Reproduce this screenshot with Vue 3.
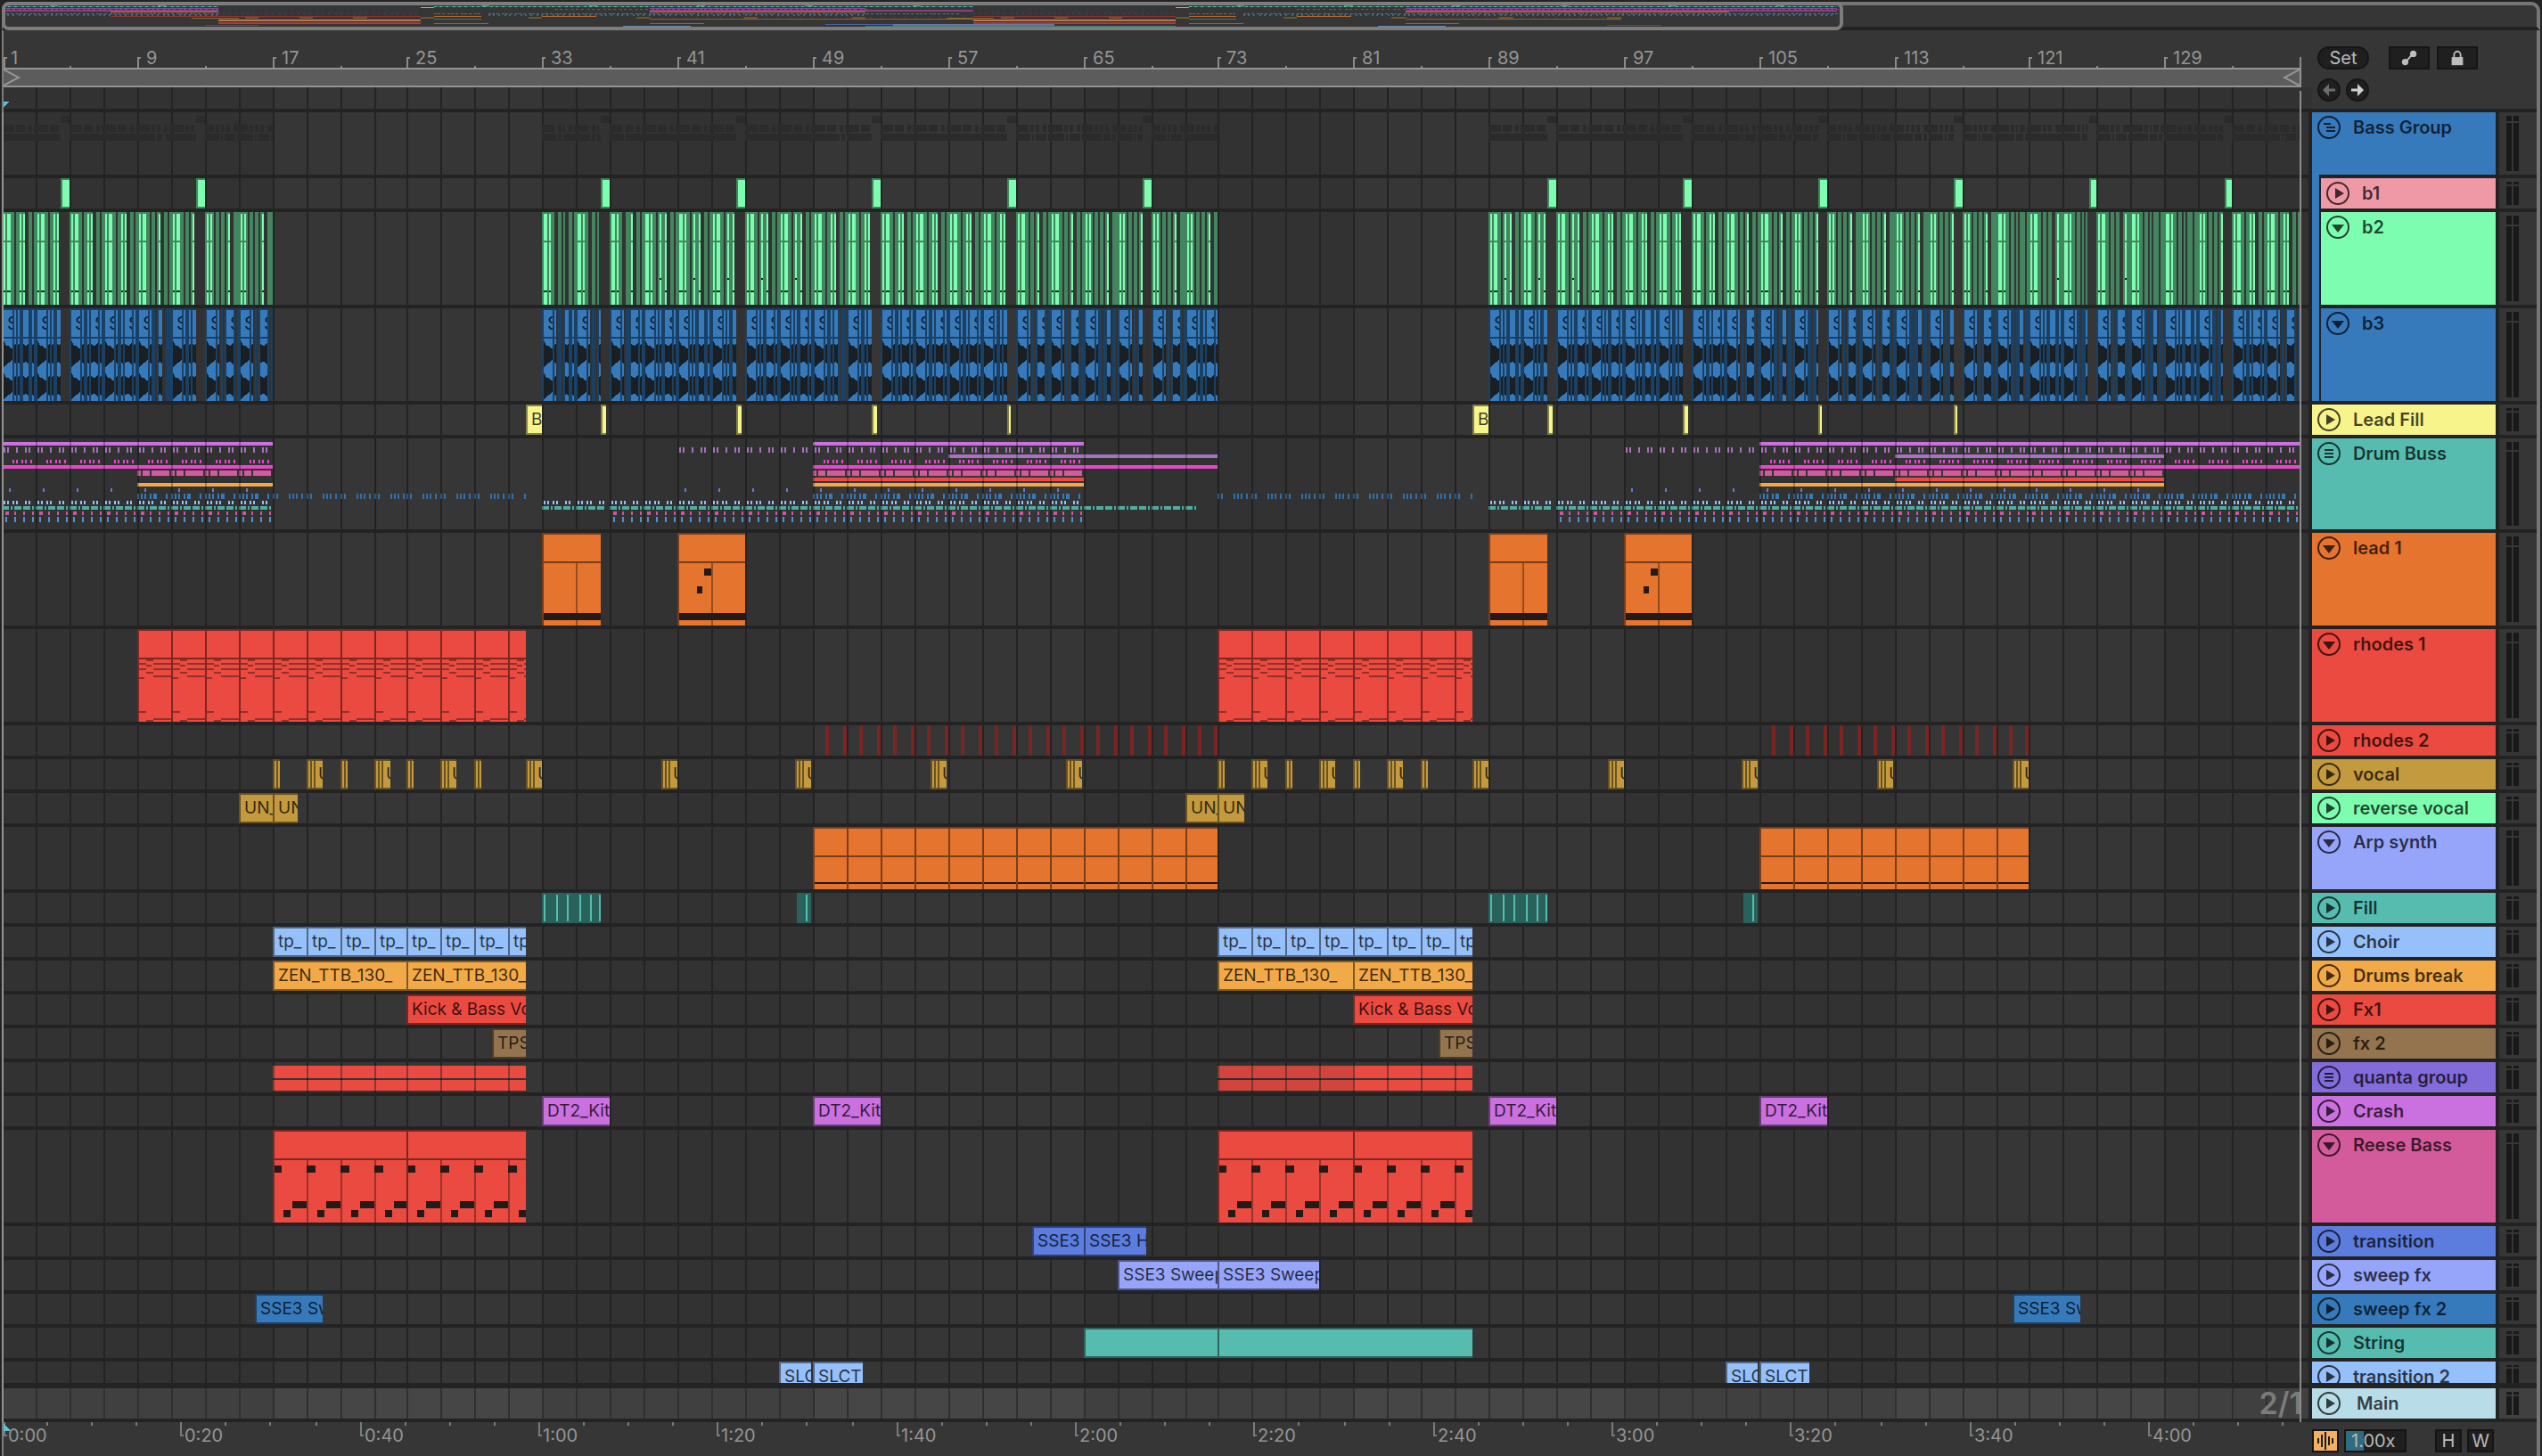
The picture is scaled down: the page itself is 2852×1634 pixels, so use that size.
<template>
  <div class="arranger">
    <!-- Overview strip -->
    <div class="overview">
      <svg class="overview-map" aria-hidden="true">
        <path v-for="(m, i) in overview" :key="i" :d="m.d" :fill="m.color" />
      </svg>
      <div class="overview-window" :style="{ width: overviewWidth + 'px' }"></div>
    </div>

    <!-- Beat ruler and set controls -->
    <div class="top">
      <div class="ruler-area">
        <div class="beat-ruler">
          <svg class="fill-svg" aria-hidden="true">
            <path :d="beatTicks" fill="#8a8a8a" />
          </svg>
          <span
            v-for="b in beatLabels"
            :key="b"
            class="beat-label"
            :style="{ left: barX(b) + 10 + 'px' }"
          >{{ b }}</span>
        </div>
        <div class="loop-brace" :style="{ width: songEnd + 2 + 'px' }">
          <svg class="loop-mark" viewBox="0 0 20 18" aria-hidden="true"><path d="M0 0 17 9 0 18" /></svg>
          <svg class="loop-mark" viewBox="0 0 20 18" aria-hidden="true"><path d="M20 0 3 9 20 18" /></svg>
        </div>
        <div class="scrub">
          <svg class="fill-svg" aria-hidden="true">
            <rect width="100%" height="100%" fill="#323232" />
            <path :d="bandPath" fill="#363636" />
            <path :d="gridPath" fill="#232323" />
            <path d="M0 16H6L0 22Z" fill="#57c3d8" />
          </svg>
        </div>
      </div>
      <div class="set-controls">
        <div class="control-row">
          <button class="pill" type="button">Set</button>
          <button class="square first" type="button" aria-label="Automation mode">
            <svg viewBox="0 0 24 22" aria-hidden="true">
              <path d="M7 17 17 5" stroke="#bdbdbd" stroke-width="2" />
              <circle cx="7" cy="16" r="4" fill="#bdbdbd" /><circle cx="17" cy="6" r="4" fill="#bdbdbd" />
            </svg>
          </button>
          <button class="square" type="button" aria-label="Lock envelopes">
            <svg viewBox="0 0 24 22" aria-hidden="true">
              <path d="M8 11V7a4 4 0 0 1 8 0v4" fill="none" stroke="#bdbdbd" stroke-width="2" />
              <rect x="5" y="10" width="14" height="10" fill="#bdbdbd" />
            </svg>
          </button>
        </div>
        <div class="control-row second">
          <button class="round" type="button" aria-label="Previous locator">
            <svg viewBox="0 0 22 22" aria-hidden="true"><path d="M4 11 11 4V9.500H18V12.500H11V18Z" fill="#6d6d6d" /></svg>
          </button>
          <button class="round" type="button" aria-label="Next locator">
            <svg viewBox="0 0 22 22" aria-hidden="true"><path d="M18 11 11 4V9.500H4V12.500H11V18Z" fill="#d0d0d0" /></svg>
          </button>
        </div>
      </div>
    </div>

    <!-- Tracks -->
    <div class="tracks">
      <div
        v-for="t in tracks"
        :key="t.name"
        class="track"
        :class="{ nested: t.nested, main: t.name === 'Main', last: t.name === 'transition 2' }"
        :style="{ height: t.h + 'px' }"
      >
        <div class="lane">
          <svg class="fill-svg" aria-hidden="true">
            <rect width="100%" height="100%" :fill="t.name === 'Main' ? '#404040' : '#323232'" />
            <path :d="bandPath" :fill="t.name === 'Main' ? '#464646' : '#363636'" />
            <path :d="gridPath" :fill="t.name === 'Main' ? '#303030' : '#232323'" />
            <path v-for="(s, i) in t.shapes" :key="i" :d="s.d" :fill="s.color" :opacity="s.opacity" />
          </svg>
          <div
            v-for="(c, i) in t.clips"
            :key="i"
            class="clip"
            :class="{ tall: t.h > 60 }"
            :style="clipStyle(c, t)"
          >
            <svg v-if="c.notes" class="clip-notes" aria-hidden="true">
              <path :d="c.notes" :fill="c.noteColor" />
            </svg>
            <span v-if="c.label" class="clip-label" :class="{ inset: c.inset }">{{ c.label }}</span>
          </div>
          <span v-for="(x, i) in t.marks" :key="'m' + i" class="wave-label" :style="{ left: x.x + 'px', width: x.w + 'px' }">S</span>
          <span v-if="t.name === 'Main'" class="grid-size">2/1</span>
        </div>

        <div class="head-cell">
          <div v-if="t.nested" class="strip"></div>
          <div class="head" :style="{ background: t.color }">
            <button class="fold" type="button" :aria-label="'Fold ' + t.name">
              <svg viewBox="0 0 26 26" aria-hidden="true">
                <circle cx="13" cy="13" r="12" fill="none" stroke="currentColor" stroke-width="2" />
                <path :d="icons[t.icon]" fill="currentColor" />
              </svg>
            </button>
            <span class="name">{{ t.name }}</span>
          </div>
        </div>

        <div class="meter">
          <i></i><i></i>
        </div>
      </div>
      <div class="end-line" :style="{ left: songEnd + 'px' }"></div>
    </div>

    <!-- Time ruler -->
    <div class="bottom">
      <div class="time-ruler">
        <svg class="fill-svg" aria-hidden="true">
          <path :d="timeTicks" fill="#7a7a7a" />
          <path d="M0 2 8 10H0Z" fill="#57c3d8" />
        </svg>
        <span v-for="l in timeLabels" :key="l.text" class="time-label" :style="{ left: l.x + 'px' }">{{ l.text }}</span>
      </div>
      <div class="footer-controls">
        <button class="wave-btn" type="button" aria-label="Waveform zoom">
          <svg viewBox="0 0 26 22" aria-hidden="true">
            <path d="M4 8h2v6H4zM8 4h2v14H8zM12 1h2v20h-2zM16 6h2v10h-2zM20 8h2v6h-2z" fill="#1d1d1d" />
          </svg>
        </button>
        <input class="speed" type="text" value="1.00x" aria-label="Waveform height">
        <button class="mini h-btn" type="button">H</button>
        <button class="mini" type="button">W</button>
      </div>
    </div>
  </div>
</template>

<script setup>
import { ref } from 'vue'

// 时间轴：小节 -> 车道内像素
const barX = (bar) => Math.floor(1.452 + 9.4795 * (bar - 1)) * 2 - 4
const rect = (x, y, w, h) => `M${x} ${y}h${w}v${h}h${-w}z`
const songEnd = barX(137)

// Grid
let gridPath = ''
let bandPath = ''
for (let b = 3; b <= 135; b += 2) gridPath += rect(barX(b), 0, 2, 110)
for (let b = 17; b < 137; b += 32) bandPath += rect(barX(b), 0, barX(b + 16) - barX(b), 110)

// Beat ruler
const beatLabels = []
let beatTicks = rect(songEnd, 30, 2, 12)
for (let b = 1; b < 137; b += 8) {
  beatLabels.push(b)
  const x = Math.max(0, barX(b))
  beatTicks += rect(x, 30, 2, 12) + rect(x, 30, 4, 2) + rect(barX(b + 4), 40, 2, 2)
}

// Time ruler
const timeLabels = []
let timeTicks = ''
for (let n = 0; n <= 51; n++) {
  const x = Math.max(0, Math.floor((2.9 + 50.17 * n) / 2) * 2 - 4)
  if (n % 4 === 0) {
    const sec = n * 5
    timeLabels.push({ x: x + 5, text: Math.floor(sec / 60) + ':' + String(sec % 60).padStart(2, '0') })
    timeTicks += rect(x, 0, 2, 16) + rect(x, 14, 4, 2)
  } else {
    timeTicks += rect(x, 0, 2, 4)
  }
}

const icons = {
  right: 'M10 7 20 13 10 19Z',
  down: 'M6 10H20L13 19Z',
  group: 'M8 8h10v2H8zM8 12h10v2H8zM8 16h10v2H8z',
  groupOpen: 'M7 8h8v2H7zM10 12h10v2H10zM10 16h10v2H10z'
}

const C = {
  blue: '#367abc', mint: '#7dfdb0', yellow: '#f7f48c', teal: '#57bcb0', orange: '#e5742e',
  red: '#eb4a40', gold: '#c49a3e', peri: '#96a5fa', sky: '#96c0fa', amber: '#f2a948',
  brown: '#93744f', violet: '#816cda', orchid: '#ca70df', pink: '#d35b9b', indigo: '#5c7ddd'
}
const ink = '#241a18'

// Two-bar patterns, one character per 2px cell
const gA = 'dgdggdd.dhddg..dd.d'
const gA2 = 'dggdgdd.dhddg..dd.d'
const gB = 'dgdggdd.ddgdg..dd.d'
const gC = 'dgdggdd.dd.dg..dd.d'
const gD = 'dgdgd.dd.dd.dg..ddd'
const gE = 'dggdgdd.dd.d.ddd.dd'
const gF = 'dgdggdd.dd.dd..dhdd'
const stop = (s, n) => s.slice(0, 19 - n) + '.'.repeat(n)

const greenCells = [
  [1, [gB, stop(gB, 6), gB, gB, gC, stop(gC, 6), gD, gD]],
  [33, ['dggdgdd..dd.d..dd.d', 'dggdgdd..dd.d......', 'dggdgdd..dddg..dd.d', gA2, gA2, stop(gA, 6), gA, gA,
    gB, stop(gB, 6), gB, gB, gB, stop(gB, 6), gC, gC, gD, stop(gD, 5), gD, gD]],
  [89, [gA, stop(gA, 6), gA, gB, gB, stop(gB, 6), gB, gC, gC, stop(gD, 5), gD, gD, gD, stop(gD, 5), gD, gE,
    gF, stop(gE, 5), gF, gE, gE, stop(gD, 5), gB, gB]]
]

const bA = 'dbbbbbdbdbddbbbbdbd'
const bB = 'dbbbbbdbddbdbbbbdbd'
const bC = 'dbbbbbdbdd.ddbb.dd.'
const bD = 'dbbbbbdb.d.dbbbbd.d'
const bE = 'dbbbbbdbdbddbbbddbd'
const blueCells = [
  [1, [bE, stop(bA, 5), bB, bB, 'dbbbbbdbdd.dbb..ddd', stop(bB, 5), bD, bD]],
  [33, ['dbbbbbdb.dd.dbbddbd', 'dbbbbbdb.dd.db.....', 'dbbbbbdb.dddbbbbdbd', bA, bE, stop(bA, 5), bA, bA,
    'dbbbbbdbddbdbbd.dd.', stop(bB, 5), bB, bB, bB, stop(bB, 5), bD, bD, bC, stop(bD, 5), bD, bB]],
  [89, [bE, stop(bA, 5), bA, bA, bE, stop(bB, 5), bB, bD, bC, stop(bC, 5), bD, bD, bC, stop(bD, 5), bD, bC,
    bE, stop(bC, 5), bD, bC, bE, stop(bC, 5), bB, bD]]
]

// 把图案展开成 {x, w, ch}
const expand = (groups) => {
  const runs = []
  groups.forEach(([start, list]) => {
    list.forEach((pattern, i) => {
      const x0 = barX(start + i * 2)
      const limit = barX(start + i * 2 + 2)
      let k = 0
      while (k < 19) {
        let n = k
        while (n < 19 && pattern[n] === pattern[k]) n++
        const x = x0 + k * 2
        const w = Math.min(limit, x0 + n * 2) - x
        if (pattern[k] !== '.' && w > 0) runs.push({ x, w, ch: pattern[k] })
        k = n
      }
    })
  })
  return runs
}

const greenRuns = expand(greenCells)
const blueRuns = expand(blueCells)
const join = (list, fn) => list.map(fn).join('')
const fillBars = []
for (let b = 4.5; b < 137; b += 8) {
  if ((b > 17 && b < 33) || (b > 73 && b < 89)) continue
  fillBars.push(b)
}

const greenBright = greenRuns.filter((r) => r.ch !== 'd')
const greenShapes = [
  { color: '#42865f', d: join(greenRuns, (r) => rect(r.x, 0, r.w, 104)) },
  { color: C.mint, d: join(greenBright, (r) => rect(r.x, 2, r.w, 30) + rect(r.x, 34, r.w, 70)) },
  { color: '#10261b', d: join(greenBright, (r) => rect(r.x, r.ch === 'h' ? 74 : 88, r.w, 2)) }
]

const blueBright = blueRuns.filter((r) => r.ch === 'b')
const lobe = (r, mid) => {
  if (r.w >= 10) {
    return `M${r.x} ${mid - 15}l3 6l3 0l2 3l2 0v12l-2 3l-3 1l-2 3l-3 2z`
  }
  return `M${r.x} ${mid - 11}l${r.w / 2} 2l${r.w / 2} -3v24l${-r.w / 2} -3l${-r.w / 2} 1z`
}
const blueShapes = [
  { color: '#1a4163', d: join(blueRuns, (r) => rect(r.x, 0, r.w, 104)) },
  { color: C.blue, d: join(blueBright, (r) => rect(r.x, 2, r.w, 30) + rect(r.x, 34, r.w, 70)) },
  { color: '#1a1f24', d: join(blueBright, (r) => lobe(r, 51) + lobe(r, 87)) }
]
const blueMarks = blueBright.filter((r) => r.w >= 8).map((r) => ({ x: r.x, w: r.w }))

const groupShapes = [
  {
    color: '#2b2b2b',
    d: join(fillBars, (b) => rect(barX(b), 4, barX(b + 0.5) - barX(b), 8)) +
      join(greenRuns, (r) => rect(r.x, 14, r.w, 8)) +
      join(blueRuns, (r) => rect(r.x, 24, r.w, 8))
  }
]

// Drum Buss: [y, height, colour, cells or null for solid, spans]
const single = (...xs) => xs.map((x) => [x, 1])
const drumRows = [
  [4, 4, '#cc70e0', null, [[1, 17], [49, 65], [105, 137]]],
  [10, 6, '#a574bd', single(1, 3, 8, 13, 15), [[1, 17], [41, 65], [97, 137]]],
  [18, 4, '#a574bd', null, [[57, 73], [113, 129]]],
  [24, 4, '#e648cb', single(6, 8, 11, 13, 16), [[1, 17], [49, 65], [105, 137]]],
  [30, 4, '#e648cb', null, [[1, 17], [49, 73], [105, 137]]],
  [36, 6, '#d35b9b', [[0, 2], [3, 4], [8, 10]], [[9, 17], [49, 65], [105, 129]]],
  [44, 4, C.red, null, [[49, 65], [113, 129]]],
  [50, 4, C.amber, null, [[9, 17], [49, 65], [105, 129]]],
  [56, 4, C.indigo, single(4), [[1, 17], [41, 65], [97, 129]]],
  [62, 6, C.blue, [[0, 1], [2, 1], [4, 1], [7, 1], [9, 2], [16, 1]], [[9, 17], [49, 65], [105, 137]]],
  [62, 6, '#326fa9', single(0, 2, 9, 11, 13, 16), [[17, 32], [73, 88]]],
  [70, 4, C.sky, single(1, 3, 6, 8, 13, 15), [[1, 17], [33, 65], [89, 137]]],
  [76, 4, '#4eaca1', [[0, 4], [5, 1], [7, 4], [12, 4], [17, 1]], [[1, 17], [33, 36.5], [37, 71.8], [89, 92.5], [93, 137]]],
  [82, 4, '#c9599a', [[2, 2], [7, 1], [12, 1], [17, 1]], [[1, 17], [37, 65], [93, 137]]],
  [88, 6, '#4596dc', single(2, 7, 12, 17), [[1, 17], [37, 65], [93, 137]]]
]
const drumShapes = drumRows.map(([y, h, color, cells, spans]) => {
  let d = ''
  spans.forEach(([a, b]) => {
    if (!cells) {
      d += rect(barX(a), y, barX(b) - barX(a), h)
      return
    }
    for (let s = a; s < b; s += 2) {
      cells.forEach(([c, n]) => {
        const x = barX(s) + c * 2
        if (x < barX(b)) d += rect(x, y, n * 2, h)
      })
    }
  })
  return { d, color }
})
drumShapes.push({ d: gridPath, color: '#232323', opacity: 0.35 })

// Clips
const clip = (from, to, color, extra = {}) => ({ from, to, color, ...extra })
const twice = (list) => [...list, ...list.map((c) => ({ ...c, from: c.from + 56, to: c.to + 56 }))]
const everyTwo = (from, to, color, extra) => {
  const list = []
  for (let b = from; b < to; b += 2) list.push(clip(b, Math.min(b + 2, to), color, extra))
  return list
}

// Offsets inside a clip start after its 2px border
const rhodesNotes = [
  [8, 34, 8], [0, 38, 8], [16, 38, 20], [8, 40, 6], [0, 44, 8], [16, 44, 20], [8, 48, 8],
  [16, 52, 20], [0, 54, 6], [0, 92, 8], [16, 100, 20], [8, 102, 8]
].map(([x, y, w]) => rect(x, y - 2, w, 2)).join('')

const reeseNotes = (n) => {
  let d = ''
  for (let i = 0; i < n; i++) {
    const x = i * 38 - 2
    d += rect(x, 38, 10, 8) + rect(x + 22, 78, 16, 8) + rect(x + 12, 88, 8, 8)
  }
  return d
}
const loopLines = (from, to, y, h) => {
  let d = ''
  for (let b = from + 2; b < to; b += 2) d += rect(barX(b), y, 2, h)
  return d
}
const vocal = (from, big) => ({
  from,
  x: barX(from),
  w: big ? 18 : 8,
  color: C.gold,
  label: big ? 'U' : '',
  inset: true,
  notes: big ? rect(2, 0, 2, 40) + rect(6, 0, 2, 40) : rect(2, 0, 2, 40),
  noteColor: '#6b5220'
})
const vocalClips = []
;[0, 56].forEach((o) => {
  ;[17, 21, 25, 29].forEach((b) => vocalClips.push(vocal(b + o, false)))
  ;[19, 23, 27, 32, 40, 48, 56, 64].forEach((b) => vocalClips.push(vocal(b + o, true)))
})

const rhodes2 = { color: '#7a2522', d: '' }
;[[49, 73], [105, 121]].forEach(([a, b]) => {
  for (let s = a; s < b; s += 2) rhodes2.d += rect(barX(s) + 14, 0, 4, 34) + rect(barX(s + 2) - 4, 0, 4, 34)
})

const quanta = [17, 73].map((b) => ({ color: C.red, d: rect(barX(b), 4, barX(b + 15) - barX(b), 14) + rect(barX(b), 20, barX(b + 15) - barX(b), 12) }))
quanta.push({ color: '#232323', opacity: 0.12, d: rect(barX(73), 4, barX(81) - barX(73), 28) })
quanta.push({ color: '#232323', opacity: 0.5, d: loopLines(15, 32, 4, 28) + loopLines(71, 88, 4, 28) })

const leadA = { notes: rect(0, 88, 80, 8), noteColor: ink, split: true }
const leadB = { notes: rect(0, 88, 80, 8) + rect(28, 38, 8, 8) + rect(20, 58, 6, 8), noteColor: ink, split: true }
const fillNotes = [2, 16, 28, 42, 54, 64].map((x) => rect(x - 2, 0, 2, 30)).join('')
const arp = { notes: rect(0, 60, 40, 2), noteColor: ink }

const tracks = ref([
  { name: 'Bass Group', h: 70, color: C.blue, icon: 'groupOpen', shapes: groupShapes },
  { name: 'b1', h: 34, color: '#ef99a6', icon: 'right', nested: true, clips: fillBars.map((b) => clip(b, b + 0.5, C.mint)) },
  { name: 'b2', h: 104, color: C.mint, icon: 'down', nested: true, shapes: greenShapes },
  { name: 'b3', h: 104, color: C.blue, icon: 'down', nested: true, shapes: blueShapes, marks: blueMarks },
  {
    name: 'Lead Fill', h: 34, color: C.yellow, icon: 'right',
    clips: [
      ...twice([clip(32, 33, C.yellow, { label: 'B' })]),
      ...twice([36.5, 44.5, 52.5, 60.5].map((b) => ({ from: b, to: b + 0.25, color: C.yellow })))
    ]
  },
  { name: 'Drum Buss', h: 102, color: C.teal, icon: 'group', shapes: drumShapes },
  { name: 'lead 1', h: 104, color: C.orange, icon: 'down', clips: twice([clip(33, 36.5, C.orange, leadA), clip(41, 45, C.orange, leadB)]) },
  { name: 'rhodes 1', h: 104, color: C.red, icon: 'down', clips: [...everyTwo(9, 32, C.red, { notes: rhodesNotes, noteColor: '#93302b' }), ...everyTwo(73, 88, C.red, { notes: rhodesNotes, noteColor: '#93302b' })] },
  { name: 'rhodes 2', h: 34, color: C.red, icon: 'right', shapes: [rhodes2] },
  { name: 'vocal', h: 34, color: C.gold, icon: 'right', clips: vocalClips },
  { name: 'reverse vocal', h: 34, color: C.mint, icon: 'right', clips: twice([clip(15, 17, C.gold, { label: 'UN_' }), clip(17, 18.5, C.gold, { label: 'UN_' })]) },
  { name: 'Arp synth', h: 70, color: C.peri, icon: 'down', clips: [...everyTwo(49, 73, C.orange, arp), ...everyTwo(105, 121, C.orange, arp)] },
  {
    name: 'Fill', h: 34, color: C.teal, icon: 'right',
    clips: twice([
      clip(33, 36.5, '#29625b', { notes: fillNotes, noteColor: C.teal, flat: true }),
      clip(48.1, 48.9, '#29625b', { notes: rect(8, 0, 2, 30), noteColor: C.teal, flat: true })
    ])
  },
  { name: 'Choir', h: 34, color: C.sky, icon: 'right', clips: twice(everyTwo(17, 32, C.sky, { label: 'tp_' })) },
  { name: 'Drums break', h: 34, color: C.amber, icon: 'right', clips: twice([clip(17, 25, C.amber, { label: 'ZEN_TTB_130_' }), clip(25, 32, C.amber, { label: 'ZEN_TTB_130_' })]) },
  { name: 'Fx1', h: 34, color: C.red, icon: 'right', clips: twice([clip(25, 32, C.red, { label: 'Kick & Bass Vo' })]) },
  { name: 'fx 2', h: 34, color: C.brown, icon: 'right', clips: twice([clip(30, 32, C.brown, { label: 'TPS' })]) },
  { name: 'quanta group', h: 34, color: C.violet, icon: 'group', shapes: quanta },
  { name: 'Crash', h: 34, color: C.orchid, icon: 'right', clips: twice([clip(33, 37, C.orchid, { label: 'DT2_Kit' }), clip(49, 53, C.orchid, { label: 'DT2_Kit' })]) },
  {
    name: 'Reese Bass', h: 104, color: C.pink, icon: 'down',
    clips: twice([17, 25].map((b) => clip(b, Math.min(b + 8, 32), C.red, { notes: reeseNotes(4), noteColor: ink, split: true })))
  },
  { name: 'transition', h: 34, color: C.indigo, icon: 'right', clips: [clip(62, 65, C.indigo, { label: 'SSE3' }), clip(65, 68.75, C.indigo, { label: 'SSE3 Hi' })] },
  { name: 'sweep fx', h: 34, color: C.peri, icon: 'right', clips: [clip(67, 73, C.peri, { label: 'SSE3 Sweep' }), clip(73, 79, C.peri, { label: 'SSE3 Sweep' })] },
  { name: 'sweep fx 2', h: 34, color: C.blue, icon: 'right', clips: [clip(16, 20, C.blue, { label: 'SSE3 Sweep' }), clip(120, 124, C.blue, { label: 'SSE3 Sweep' })] },
  { name: 'String', h: 34, color: C.teal, icon: 'right', clips: [clip(65, 73, C.teal), clip(73, 88, C.teal)] },
  { name: 'transition 2', h: 24, color: C.sky, icon: 'right', clips: twice([clip(47, 48.9, C.sky, { label: 'SLC' }), clip(49, 52, C.sky, { label: 'SLCT' })]) },
  { name: 'Main', h: 34, color: '#b9dde8', icon: 'right' }
])

const clipStyle = (c, t) => {
  const x = c.x ?? barX(c.from)
  const w = c.w ?? barX(c.to) - x
  const style = {
    left: x + 'px',
    width: w + 'px',
    '--clip': c.color,
    '--edge': c.flat ? c.color : `color-mix(in srgb, ${c.color} 53%, black)`
  }
  if (c.split) style['--loop'] = `color-mix(in srgb, ${c.color} 66%, black)`
  if (t.name === 'transition 2') style.height = '34px'
  return style
}

// Overview map, about 15px per bar
const mapX = (bar) => Math.round(3 + (bar - 1) * 15.13)
const overviewWidth = mapX(137) + 5
const map = (color, y, h, spans, step = 0, on = 2) => {
  let d = ''
  spans.forEach(([a, b]) => {
    if (!step) {
      d += rect(mapX(a), y, mapX(b) - mapX(a), h)
      return
    }
    for (let x = mapX(a), i = 0; x < mapX(b); x += step + (i++ % 3)) d += rect(x, y, on, h)
  })
  return { d, color }
}
const played = [[1, 17], [33, 73], [89, 137]]
const overview = [
  map('#3f9c6b', 6, 1, fillBars.map((b) => [b, b + 0.6])),
  map('#2f6a70', 7, 1, played),
  map('#5fc79a', 7, 1, played, 6, 3),
  map('#b3ad55', 8, 1, [[32, 33], [88, 89]]),
  map('#7d4a8c', 9, 1, [[1, 17], [49, 65], [105, 137]]),
  map('#6f4a85', 10, 1, [[1, 17], [42, 65], [97, 137]], 5, 3),
  map('#8c3f7e', 11, 2, [[1, 17], [49, 73], [105, 137]]),
  map('#b04a86', 12, 1, [[9, 17], [49, 65], [105, 129]]),
  map('#a8632f', 13, 1, [[9, 17], [49, 65], [105, 129]]),
  map('#23466b', 14, 2, [[9, 32], [49, 65], [73, 88], [105, 137]], 6, 2),
  map('#3f7f86', 15, 1, [[1, 17], [33, 36.5], [37, 72], [89, 92.5], [93, 137]], 4, 3),
  map('#3d6590', 16, 2, [[1, 17], [37, 65], [93, 137]], 5, 2),
  map('#b2642c', 18, 1, [[33, 36.5], [41, 45], [89, 92.5], [97, 101]]),
  map('#8f332e', 18, 1, [[9, 32], [73, 88]]),
  map('#7a3028', 19, 1, [[49, 73], [105, 121]], 12, 3),
  map('#6f5526', 19, 2, [[19, 20], [23, 24], [27, 28], [32, 33], [40, 41], [48, 49], [56, 57], [64, 65], [75, 76], [79, 80], [83, 84], [88, 89], [96, 97], [104, 105], [112, 113], [120, 121]]),
  map('#8c6a2d', 20, 1, [[15, 18.5], [71, 74.5]]),
  map('#a05a28', 21, 1, [[49, 73], [105, 121]]),
  map('#37756e', 21, 1, [[33, 36.5], [89, 92.5]]),
  map('#c0a07c', 22, 1, [[17, 32], [73, 88]]),
  map('#a5552f', 23, 1, [[17, 32], [73, 88]]),
  map('#b03c36', 25, 2, [[17, 32], [73, 88]]),
  map('#8a5a9a', 26, 1, [[33, 37], [49, 53], [89, 93], [105, 109]]),
  map('#4a5f9c', 27, 1, [[62, 68.7]]),
  map('#6674a5', 27, 2, [[67, 79]]),
  map('#2b5a86', 28, 1, [[16, 20], [120, 124]]),
  map('#3a7a74', 29, 1, [[65, 88]]),
  map('#6c86b0', 29, 1, [[47, 49], [49, 52], [103, 105], [105, 108]])
]
</script>

<style>
body {
  margin: 0;
  background: #222;
}
</style>

<style scoped>
.arranger {
  position: relative;
  display: flex;
  flex-direction: column;
  padding: 2px 2px 0;
  background: #232323;
  color: #949494;
  font-family: Inter, "Noto Sans", sans-serif;
  font-size: 20px;
  line-height: 24px;
}

button,
input {
  margin: 0;
  padding: 0;
  font: inherit;
  box-sizing: border-box;
}

button {
  cursor: pointer;
}

.fill-svg {
  position: absolute;
  inset: 0;
  width: 100%;
  height: 100%;
  shape-rendering: crispEdges;
}

/* Overview */
.overview {
  position: relative;
  height: 24px;
  border: 4px solid #757575;
  border-left-width: 2px;
  border-bottom: 4px solid #232323;
  border-radius: 10px 10px 0 0;
  background: #363636;
}

.overview-map {
  position: absolute;
  left: -4px;
  top: -6px;
  width: 100%;
  height: 34px;
  shape-rendering: crispEdges;
}

.overview-window {
  position: absolute;
  left: -2px;
  top: -4px;
  bottom: -4px;
  box-sizing: border-box;
  border: 4px solid #7d7d7d;
  border-radius: 8px;
}

/* Ruler */
.top {
  display: flex;
  border-left: 2px solid #7d7d7d;
  border-right: 4px solid #757575;
  background: #363636;
}

.ruler-area {
  flex: 1;
  min-width: 0;
  overflow: hidden;
}

.beat-ruler {
  position: relative;
  height: 42px;
}

.beat-label {
  position: absolute;
  top: 19px;
}

.loop-brace {
  display: flex;
  justify-content: space-between;
  box-sizing: border-box;
  height: 22px;
  border-top: 2px solid #949494;
  border-bottom: 2px solid #949494;
  border-right: 2px solid #949494;
  background: #5c5c5c;
}

.loop-mark {
  width: 20px;
  height: 18px;
  fill: none;
  stroke: #949494;
  stroke-width: 2;
}

.scrub {
  position: relative;
  height: 24px;
  border-bottom: 4px solid #232323;
}

.set-controls {
  width: 252px;
  padding-top: 18px;
  box-sizing: border-box;
  border-bottom: 4px solid #232323;
}

.control-row {
  display: flex;
  gap: 8px;
  padding-left: 6px;
}

.control-row.second {
  gap: 6px;
  margin-top: 10px;
}

.pill,
.square,
.round {
  display: flex;
  align-items: center;
  justify-content: center;
  height: 26px;
  border: 2px solid #151515;
  background: #1f1f1f;
  color: #b9b9b9;
}

.pill {
  width: 58px;
  border-radius: 13px;
}

.square {
  width: 46px;
}

.square.first {
  margin-left: 14px;
}

.round {
  width: 26px;
  border-radius: 50%;
}

.square svg {
  width: 22px;
  height: 20px;
}

.round svg {
  width: 22px;
  height: 22px;
  flex: none;
}

/* Tracks */
.tracks {
  position: relative;
  border-left: 2px solid #949494;
  border-right: 4px solid #757575;
}

.track {
  display: flex;
  gap: 4px;
  margin-bottom: 4px;
}

.track.last {
  margin-bottom: 6px;
}

.lane {
  position: relative;
  flex: 1;
  min-width: 0;
  overflow: hidden;
}

.clip {
  position: absolute;
  top: 0;
  bottom: 0;
  box-sizing: border-box;
  overflow: hidden;
  border: 2px solid var(--edge);
  border-right: 0;
  background: var(--clip);
}

.clip.tall {
  border-bottom: 0;
  background: linear-gradient(var(--clip) 30px, var(--edge) 30px, var(--edge) 32px, transparent 32px), repeating-linear-gradient(to right, var(--clip) 0 36px, var(--loop, var(--clip)) 36px 38px);
}

.clip-notes {
  position: absolute;
  inset: 0;
  width: 100%;
  height: 100%;
  shape-rendering: crispEdges;
}

.clip-label {
  position: relative;
  display: block;
  padding-left: 4px;
  font-size: 19px;
  line-height: 30px;
  white-space: nowrap;
  color: rgba(0, 0, 0, 0.75);
}

.clip-label.inset {
  padding-left: 11px;
}

.wave-label {
  position: absolute;
  top: 2px;
  box-sizing: border-box;
  padding-left: 4px;
  overflow: hidden;
  line-height: 30px;
  color: rgba(0, 0, 0, 0.75);
}

.grid-size {
  position: absolute;
  right: 7px;
  top: 0;
  font-size: 34px;
  font-weight: 600;
  line-height: 34px;
  color: #7b7b7b;
}

.end-line {
  position: absolute;
  top: -24px;
  bottom: 0;
  width: 2px;
  background: #8c8c8c;
}

.head-cell {
  display: flex;
  gap: 2px;
  width: 206px;
}

.strip {
  width: 8px;
  margin-top: -4px;
  background: #367abc;
}

.head {
  display: flex;
  flex: 1;
  align-items: flex-start;
  gap: 14px;
  padding: 4px 6px 0;
  overflow: hidden;
  color: rgba(0, 0, 0, 0.73);
}

.main .head {
  gap: 18px;
}

.fold {
  display: flex;
  flex: none;
  border: 0;
  background: none;
  color: inherit;
}

.fold svg {
  width: 26px;
  height: 26px;
}

.name {
  line-height: 26px;
  font-weight: 600;
  white-space: nowrap;
}

.meter {
  display: flex;
  gap: 2px;
  box-sizing: border-box;
  width: 42px;
  padding: 4px 8px;
  background: #363636;
}

.meter i {
  width: 6px;
  background: linear-gradient(#191919 10%, #363636 10%, #363636 calc(10% + 2px), #191919 calc(10% + 2px));
}

.track.main .meter {
  background: #404040;
}

.track.last .meter {
  padding-bottom: 0;
}

/* Time ruler */
.bottom {
  display: flex;
  gap: 4px;
  border-left: 2px solid #7d7d7d;
  border-right: 4px solid #757575;
  background: #363636;
}

.time-ruler {
  position: relative;
  flex: 1;
  min-width: 0;
  height: 38px;
  overflow: hidden;
}

.time-label {
  position: absolute;
  top: 3px;
}

.footer-controls {
  display: flex;
  gap: 6px;
  width: 252px;
  padding-top: 8px;
}

.wave-btn,
.speed,
.mini {
  height: 26px;
  border: 2px solid #151515;
  background: #1f1f1f;
  color: #b9b9b9;
}

.wave-btn {
  display: flex;
  align-items: center;
  width: 30px;
  background: #f4b062;
}

.speed {
  width: 70px;
  padding-left: 6px;
  background: linear-gradient(to right, #2f6c7e 20px, #1f1f1f 20px);
}

.mini {
  width: 30px;
  line-height: 22px;
}

.h-btn {
  margin-left: 26px;
}
</style>
